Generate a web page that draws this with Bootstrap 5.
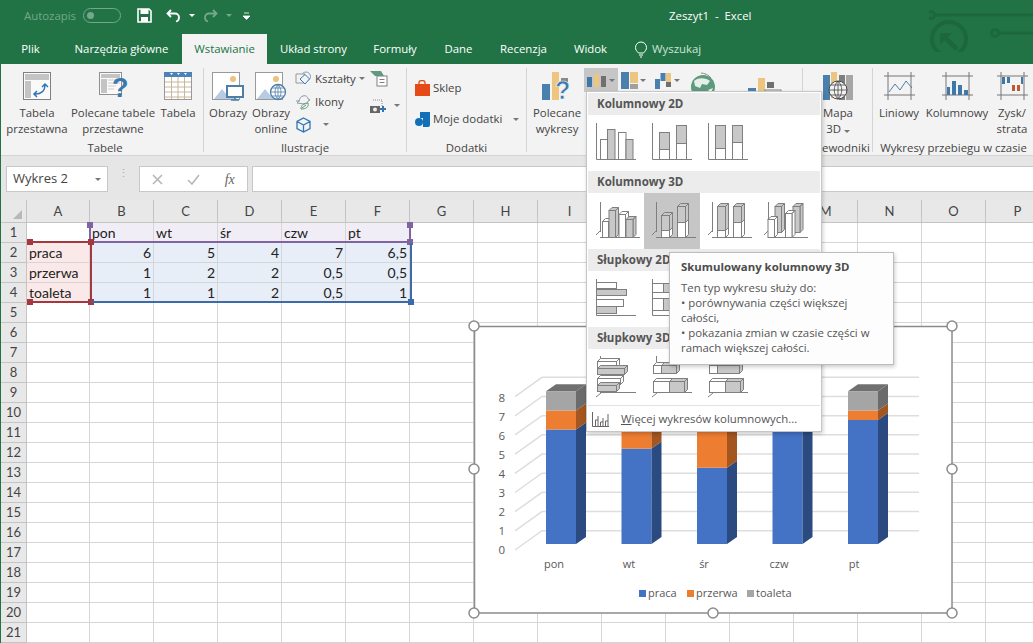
<!DOCTYPE html>
<html lang="pl">
<head>
  <meta charset="UTF-8">
  <meta name="viewport" content="width=device-width, initial-scale=1">
  <title>Zeszyt1 - Excel</title>
  <link href="https://cdn.jsdelivr.net/npm/bootstrap@5.3.2/dist/css/bootstrap.min.css" rel="stylesheet">
  <style>
    html, body { margin: 0; height: 643px; overflow: hidden; }
    body { font-family: "Open Sans", "Noto Sans", sans-serif; font-size: 11.4px; color: #444; }
    .app { width: 1033px; height: 643px; padding-left: 1px; background: #217346; position: relative; overflow: hidden; }

    /* title bar + tabs */
    .title-row { height: 32px; margin-left: -1px; color: #fff; }
    .qa { width: 669px; padding-left: 24px; }
    .auto-txt { color: #74a88b; width: 59px; }
    .toggle { width: 38px; height: 15px; border: 1px solid #74a88b; border-radius: 8px; padding: 3px; margin-right: 16px; }
    .toggle i { display: block; width: 7px; height: 7px; border-radius: 50%; background: #74a88b; }
    .save-ico { margin-right: 14px; }
    .qa-more { margin-left: 11px; }
    .circuit { position: absolute; right: 0; top: 0; }
    .tabs { height: 32px; margin-left: -1px; padding-top: 2px; color: #fff; }
    .xl-tab { line-height: 30px; text-align: center; white-space: nowrap; }
    .xl-tab.on { background: #f3f3f3; color: #217346; }
    .t1 { width: 61px; } .t2 { width: 121px; } .t3 { width: 85px; } .t4 { width: 93px; }
    .t5 { width: 70px; } .t6 { width: 57px; } .t7 { width: 73px; } .t8 { width: 61px; }
    .search { color: #cfe3d7; margin-left: 13px; gap: 4px; }

    /* ribbon */
    .ribbon { height: 92px; background: #f3f3f3; border-bottom: 1px solid #d4d4d4; overflow: hidden; }
    .rb-group { margin-top: 4px; height: 84px; border-right: 1px solid #d4d4d4; flex: none; }
    .rb-items { height: 74px; }
    .rb-label { height: 12px; line-height: 12px; text-align: center; white-space: nowrap; }
    .rb-big { padding-top: 4px; line-height: 16px; text-align: center; flex: none; white-space: nowrap; }
    .rb-big svg { margin-bottom: 5px; display: block; overflow: visible; }
    .g1 { width: 203px; padding-left: 6px; } .g2 { width: 203px; } .g3 { width: 120px; }
    .g4 { width: 276px; } .g5 { width: 70px; } .g6 { width: 161px; border: 0; }
    .w38 { width: 38px; } .w40 { width: 40px; } .w46 { width: 46px; } .w52 { width: 52px; }
    .w60 { width: 60px; } .w64 { width: 64px; } .w70 { width: 70px; } .w92 { width: 92px; }
    .pad4 { margin-left: 4px; }
    .small-col { width: 75px; margin-top: -1px; margin-left: 1px; }
    .small-row { height: 23px; gap: 3px; white-space: nowrap; }
    .small-col2 { width: 34px; margin-top: -1px; }
    .add-col { padding: 12px 0 0 8px; gap: 15px; }
    .add-row { height: 16px; gap: 3px; white-space: nowrap; }
    .caret { display: inline-block; width: 0; height: 0; border: 3px solid transparent; border-top: 3px solid #777; border-bottom: 0; }
    .caret.lt { border-top-color: #fff; }
    .caret.dim { border-top-color: #74a88b; }
    .chart-btns { margin-left: 1px; width: 106px; }
    .cbtn { height: 24px; width: 34px; flex: none; gap: 2px; padding-left: 3px; }
    .cbtn.on { background: #c6c6c6; }
    .globe-ico { margin-top: 4px; }
    .pivot-ico { margin: 8px 0 0 32px; }

    /* formula row */
    .formula-row { height: 44px; background: #e6e6e6; padding: 10px 0 0 5px; }
    .fbox { height: 26px; background: #fff; border: 1px solid #c8c8c8; }
    .name-box { width: 102px; font-size: 13px; padding: 0 6px; }
    .dots { width: 31px; color: #aaa; font-size: 11px; line-height: 5px; text-align: center; }
    .fx-box { width: 109px; color: #b5b5b5; margin-right: 4px; }
    .fx-box em { font-family: "Liberation Serif", serif; font-size: 14px; color: #666; }
    .f-input { flex: 1; border-right: 0; }

    /* sheet */
    .sheet { position: relative; height: 443px; background: #fff; display: grid;
      grid-template-columns: 26px 63px repeat(15, 64px); grid-template-rows: 23px repeat(21, 20px);
      font-family: Lato, "Open Sans", sans-serif; font-size: 14px; color: #222; overflow: hidden; }
    .xc { border-right: 1px solid #d6d6d6; border-bottom: 1px solid #d6d6d6; padding: 0 2px; line-height: 19px; white-space: nowrap; }
    .xh { background: #e8e8e8; border-right: 1px solid #c4c4c4; border-bottom: 1px solid #c4c4c4; text-align: center; color: #444;
      font-size: 13px; line-height: 22px; }
    .rh { line-height: 19px; }
    .num { text-align: right; }
    .f-a { background: #fbe9e9; } .f-h { background: #f1edf6; } .f-b { background: #e7eef8; }
    .corner { position: relative; }
    .corner i { position: absolute; right: 4px; bottom: 3px; border-left: 9px solid transparent; border-bottom: 9px solid #b8b8b8; }
    .rng { position: absolute; pointer-events: none; }
    .r-h { left: 88px; top: 22px; width: 322px; height: 21px; border-left: 2px solid #8064a2; border-right: 2px solid #8064a2; border-bottom: 2px solid #8064a2; }
    .r-a { left: 26px; top: 41px; width: 65px; height: 62px; border-top: 2px solid #a5373f; border-right: 2px solid #a5373f; border-bottom: 2px solid #a5373f; }
    .r-b { left: 90px; top: 43px; width: 321px; height: 60px; border-right: 2px solid #3d6aa8; border-bottom: 2px solid #3d6aa8; }
    .hd { position: absolute; width: 6px; height: 6px; }
    .r-h .hd { background: #8064a2; } .r-a .hd { background: #a5373f; } .r-b .hd { background: #3d6aa8; }

    /* chart + dropdown */
    .chart { position: absolute; left: 474px; top: 326px; overflow: visible; font-family: "Open Sans", sans-serif; }
    .gallery { position: absolute; left: 586px; top: 91px; width: 236px; height: 341px; background: #fff; border: 1px solid #c6c6c6;
      box-shadow: 1px 2px 4px rgba(0,0,0,.2); padding: 1px; }
    .gal-head { height: 22px; line-height: 21px; background: #ececec; font-weight: 700; color: #555; padding-left: 9px; font-size: 11.5px; }
    .gal-row { height: 56px; }
    .gal-row:first-of-type { height: 55px; }
    .gal-tile { width: 56px; height: 56px; flex: none; }
    .gal-tile.on { background: #c6c6c6; }
    .gal-more { border-top: 1px solid #e2e2e2; height: 27px; padding-left: 4px; gap: 12px; color: #555; white-space: nowrap; }
    .tip { position: absolute; left: 669px; top: 252px; width: 225px; height: 113px; background: #fdfdfd; border: 1px solid #bdbdbd;
      box-shadow: 1px 2px 4px rgba(0,0,0,.2); padding: 6px 11px; line-height: 15px; color: #555; white-space: nowrap; }
    .tip b { display: block; margin-bottom: 6px; color: #4c4c4c; }
  </style>
</head>
<body>
<div class="app">
  <div class="title-row d-flex align-items-center">
    <div class="qa d-flex align-items-center">
      <span class="auto-txt">Autozapis</span>
      <span class="toggle"><i></i></span>
      <svg width="15" height="15" viewBox="0 0 15 15" class="save-ico"><path d="M1 1h11l2 2v11H1z" fill="none" stroke="#fff" stroke-width="1.6"/><rect x="3.5" y="1" width="8" height="5" fill="#fff"/><rect x="4" y="9" width="7" height="5" fill="#fff"/></svg>
      <svg width="15" height="14" viewBox="0 0 15 14"><path d="M5 1 1.5 4.500 5 8M2 4.500h7a4 4 0 0 1 4 4c0 2-1 3.500-3 4" fill="none" stroke="#fff" stroke-width="1.800"/></svg>
      <span class="caret lt ms-2 me-1"></span>
      <svg width="15" height="14" viewBox="0 0 15 14" class="ms-1"><path d="M10 1l3.500 3.500L10 8M13 4.500H6a4 4 0 0 0-4 4c0 2 1 3.500 3 4" fill="none" stroke="#74a88b" stroke-width="1.800"/></svg>
      <span class="caret dim ms-2"></span>
      <svg width="7" height="8" viewBox="0 0 7 8" class="qa-more"><path d="M1 1h5M0 4h7l-3.500 3.500z" fill="#fff" stroke="#fff" stroke-width=".8"/></svg>
    </div>
    <span>Zeszyt1&nbsp; -&nbsp; Excel</span>
  </div>
  <svg class="circuit" width="104" height="64" viewBox="929 0 104 64" fill="none" stroke="#1c673c" stroke-width="3">
    <defs><clipPath id="cutLogo"><rect x="925" y="0" width="60" height="52"/></clipPath></defs>
    <path d="M934 15h99M999 33h34"/><circle cx="931" cy="15" r="3.500"/><circle cx="995" cy="33" r="3.500"/>
    <g clip-path="url(#cutLogo)"><circle cx="949" cy="39" r="17" stroke-width="4"/><path d="M940 33h12l-12 12z" fill="#1c673c" stroke="none"/><path d="M943 36l14 13" stroke-width="4.500"/></g>
  </svg>
  <div class="tabs d-flex">
    <div class="xl-tab t1">Plik</div>
    <div class="xl-tab t2">Narzędzia główne</div>
    <div class="xl-tab t3 on">Wstawianie</div>
    <div class="xl-tab t4">Układ strony</div>
    <div class="xl-tab t5">Formuły</div>
    <div class="xl-tab t6">Dane</div>
    <div class="xl-tab t7">Recenzja</div>
    <div class="xl-tab t8">Widok</div>
    <div class="search d-flex align-items-center">
      <svg width="14" height="17" viewBox="0 0 14 17" fill="none" stroke="#fff"><path d="M4.500 12C2.500 10 1.500 8.500 1.500 6.500a5.500 5.500 0 0 1 11 0c0 2-1 3.500-3 5.500zM5 14h4M6 16h2"/></svg>
      <span>Wyszukaj</span>
    </div>
  </div>

  <div class="ribbon d-flex">
    <div class="rb-group g1">
      <div class="rb-items d-flex">
        <div class="rb-big w60 d-flex flex-column align-items-center">
          <svg width="28" height="28" viewBox="0 0 28 28"><rect x=".5" y=".5" width="27" height="27" fill="#fafafa" stroke="#808080"/><rect x="2" y="2" width="24" height="6" fill="#c4c4c4"/><rect x="2" y="9" width="6" height="17" fill="#c4c4c4"/><path d="M12 22c6 0 10-3 10-9M19 15l3-3 3 3M14 19l-3 3 3 3" fill="none" stroke="#2f75b5" stroke-width="1.500"/></svg>
          <span>Tabela<br>przestawna</span>
        </div>
        <div class="rb-big w92 d-flex flex-column align-items-center">
          <svg width="28" height="28" viewBox="0 0 28 28"><rect x=".5" y=".5" width="22" height="22" fill="#fafafa" stroke="#909090"/><rect x="2" y="2" width="19" height="4" fill="#c4c4c4"/><rect x="2" y="7" width="6" height="14" fill="#c4c4c4"/><path d="M9 8h12M9 11h12M9 14h8M9 17h6" stroke="#ccc"/><text x="13" y="25" font-size="27" font-weight="700" fill="#3a78b0" font-family="Liberation Sans, sans-serif">?</text></svg>
          <span>Polecane tabele<br>przestawne</span>
        </div>
        <div class="rb-big w38 d-flex flex-column align-items-center">
          <svg width="28" height="28" viewBox="0 0 28 28"><rect x=".5" y=".5" width="27" height="27" fill="#fff" stroke="#999"/><rect width="28" height="5" fill="#4d82b8"/><path d="M1 10h26M1 15h26M1 20h26M1 25h26M7.500 5v22M14 5v22M20.500 5v22" stroke="#c9b59a"/><path d="M6 1h3L7.500 3zM13 1h3l-1.500 2zM20 1h3l-1.500 2z" fill="#fff"/></svg>
          <span>Tabela</span>
        </div>
      </div>
      <div class="rb-label">Tabele</div>
    </div>

    <div class="rb-group g2">
      <div class="rb-items d-flex">
        <div class="rb-big w40 pad4 d-flex flex-column align-items-center">
          <svg width="32" height="28" viewBox="0 0 32 28"><rect x=".5" y=".5" width="27" height="27" fill="#fff" stroke="#999"/><circle cx="21" cy="7" r="3" fill="#ecc27e"/><path d="M2 27l8-10 5 6 3-3 7 7z" fill="#b7cce3"/><rect x="15" y="14" width="16" height="11" fill="#fff" stroke="#4c7ea8" stroke-width="2"/><path d="M23 25v3M19 28h8" stroke="#4c7ea8" stroke-width="1.500"/></svg>
          <span>Obrazy</span>
        </div>
        <div class="rb-big w46 d-flex flex-column align-items-center">
          <svg width="32" height="28" viewBox="0 0 32 28"><rect x=".5" y=".5" width="27" height="27" fill="#fff" stroke="#999"/><circle cx="21" cy="7" r="3" fill="#ecc27e"/><path d="M2 27l8-10 5 6 3-3 7 7z" fill="#b7cce3"/><circle cx="23" cy="20" r="7.500" fill="#fff" stroke="#4c7ea8" stroke-width="1.300"/><path d="M15.500 20h15M23 12.500v15M17 16h12M17 24h12M23 12.500c-4 4-4 11 0 15M23 12.500c4 4 4 11 0 15" fill="none" stroke="#4c7ea8" stroke-width=".8"/></svg>
          <span>Obrazy<br>online</span>
        </div>
        <div class="small-col">
          <div class="small-row d-flex align-items-center">
            <svg width="17" height="16" viewBox="0 0 17 16" fill="none"><circle cx="11" cy="5.500" r="4.500" stroke="#7f9db8"/><path d="M1 3h9v9H1z" stroke="#999" fill="#f3f3f3"/><path d="M10 3.500 14.500 8 10 13 5 8z" stroke="#3b7ab0" fill="#f3f3f3"/></svg>
            <span>Kształty</span><span class="caret"></span>
          </div>
          <div class="small-row d-flex align-items-center">
            <svg width="17" height="16" viewBox="0 0 17 16" fill="none" stroke="#8a9aa8"><path d="M2 9c3-2 2-6 6-7 3-1 5 1 5 3l2 1-2 1c0 2-2 3-4 3zM1 7h4"/><path d="M6 15c0-4 3-6 7-6 1 4-2 6-7 6zM7 14l4-3" stroke="#5f9a7c"/></svg>
            <span>Ikony</span>
          </div>
          <div class="small-row d-flex align-items-center">
            <svg width="17" height="16" viewBox="0 0 17 16" fill="none" stroke="#2f75b5" stroke-width="1.300"><path d="M8.500 1 15 4.500v7L8.500 15 2 11.500v-7zM2 4.500l6.500 3.500L15 4.500M8.500 8v7"/></svg>
            <span class="caret ms-2"></span>
          </div>
        </div>
        <div class="small-col2">
          <div class="small-row d-flex align-items-center">
            <svg width="18" height="17" viewBox="0 0 18 17"><path d="M0 1h11l3 5H5z" fill="#5e9a7d"/><rect x="7" y="6" width="10" height="10" fill="#fff" stroke="#808080"/><path d="M9.500 9.500h5M9.500 12.500h5" stroke="#808080"/></svg>
          </div>
          <div class="small-row d-flex align-items-center mt-1">
            <svg width="17" height="14" viewBox="0 0 17 14"><path d="M3 1h9v6" fill="none" stroke="#888" stroke-dasharray="1 1"/><rect x="0" y="7" width="10" height="7" fill="#666"/><circle cx="5" cy="10.500" r="2" fill="#eee"/><path d="M13 7v6M10 10h6" stroke="#2f75b5" stroke-width="2"/></svg>
            <span class="caret ms-1"></span>
          </div>
        </div>
      </div>
      <div class="rb-label">Ilustracje</div>
    </div>

    <div class="rb-group g3">
      <div class="rb-items add-col d-flex flex-column">
        <div class="add-row d-flex align-items-center">
          <svg width="15" height="16" viewBox="0 0 15 16"><path d="M0 4h15v12H0z" fill="#e64a19"/><path d="M4 4V2.500a3 2 0 0 1 6 0V4" fill="none" stroke="#e64a19" stroke-width="1.300"/></svg>
          <span>Sklep</span>
        </div>
        <div class="add-row d-flex align-items-center">
          <svg width="15" height="15" viewBox="0 0 15 15"><path d="M5 0h10v13a2 2 0 0 1-2 2H8V6H5z" fill="#1170b8"/><circle cx="4" cy="10" r="4" fill="#1170b8"/></svg>
          <span>Moje dodatki</span><span class="caret ms-2"></span>
        </div>
      </div>
      <div class="rb-label">Dodatki</div>
    </div>

    <div class="rb-group g4">
      <div class="rb-items d-flex">
        <div class="rb-big w52 pad4 d-flex flex-column align-items-center">
          <svg width="30" height="28" viewBox="0 0 30 28"><rect x="0" y="12" width="8" height="16" fill="#4a80ad"/><rect x="10" y="0" width="7" height="28" fill="#eec57f"/><rect x="19" y="6" width="7" height="4" fill="#8a8a8a"/><text x="13" y="27" font-size="25" font-weight="700" fill="#3a78b0" stroke="#f3f3f3" stroke-width=".6" font-family="Liberation Sans, sans-serif">?</text></svg>
          <span>Polecane<br>wykresy</span>
        </div>
        <div class="chart-btns d-flex align-items-start">
          <div class="cbtn on d-flex align-items-center">
            <svg width="20" height="13" viewBox="0 0 20 13"><rect x="0" y="3" width="5" height="10" fill="#3d78a8"/><rect x="7" y="0" width="5" height="13" fill="#eec57f"/><rect x="14" y="2" width="5" height="11" fill="#707070"/></svg><span class="caret"></span>
          </div>
          <div class="cbtn d-flex align-items-center">
            <svg width="17" height="17" viewBox="0 0 17 17"><rect width="8" height="17" fill="#4a80ad"/><rect x="9" width="8" height="11" fill="#eec57f"/><rect x="9" y="12" width="8" height="5" fill="#a0a0a0"/></svg><span class="caret"></span>
          </div>
          <div class="cbtn d-flex align-items-center">
            <svg width="17" height="17" viewBox="0 0 17 17"><rect x="0" y="7" width="5" height="10" fill="#4a80ad"/><rect x="5.500" y="1" width="5" height="8" fill="#4a80ad"/><rect x="11" y="1" width="5" height="9" fill="#eec57f"/><rect x="11" y="10" width="5" height="5" fill="#707070"/></svg><span class="caret"></span>
          </div>
        </div>
        <svg width="26" height="28" viewBox="0 0 26 28" class="globe-ico"><circle cx="13" cy="15" r="12" fill="#5d9a7e"/><path d="M4 9c5-4 12-3 16 0l-3 4-5-1-2 4-5-2zM18 18l5-2-2 5z" fill="#e6efe9"/><path d="M11 1c3 0 8 2 10 5" fill="none" stroke="#888"/></svg>
        <svg width="34" height="28" viewBox="0 0 34 28" class="pivot-ico"><rect x="0" y="12" width="8" height="16" fill="#4a80ad"/><rect x="10" y="2" width="7" height="26" fill="#eec57f"/><rect x="19" y="6" width="7" height="6" fill="#707070"/><rect x="17" y="14" width="16" height="12" fill="#f3f3f3" stroke="#808080"/></svg>
      </div>
      <div class="rb-label">&nbsp;</div>
    </div>

    <div class="rb-group g5">
      <div class="rb-items d-flex">
        <div class="rb-big w70 d-flex flex-column align-items-center">
          <svg width="30" height="28" viewBox="0 0 30 28"><rect x="0" y="3" width="7" height="25" fill="#4a80ad"/><rect x="8" y="0" width="6" height="26" fill="#eec57f"/><rect x="16" y="3" width="6" height="25" fill="#7f7f7f"/><rect x="23" y="3" width="7" height="25" fill="#a6a6a6"/><circle cx="15" cy="18" r="9" fill="#f3f3f3" stroke="#444"/><path d="M6 18h18M15 9v18M8 13h14M8 23h14M15 9c-5 5-5 13 0 18M15 9c5 5 5 13 0 18" fill="none" stroke="#444" stroke-width=".8"/></svg>
          <span>Mapa<br>3D <span class="caret"></span></span>
        </div>
      </div>
      <div class="rb-label">Przewodniki</div>
    </div>

    <div class="rb-group g6">
      <div class="rb-items d-flex">
        <div class="rb-big w52 d-flex flex-column align-items-center">
          <svg width="31" height="28" viewBox="0 0 31 28" fill="none"><path d="M0 4h31M0 23h31M4 0v28M27 0v28" stroke="#777"/><path d="M5 20l6-8 5 6 6-9 6 7" stroke="#4a80ad"/></svg>
          <span>Liniowy</span>
        </div>
        <div class="rb-big w64 d-flex flex-column align-items-center">
          <svg width="31" height="28" viewBox="0 0 31 28" fill="none"><path d="M0 4h31M0 23h31M4 0v28M27 0v28" stroke="#777"/><path d="M5 15h3v8H5zM10 9h4v14h-4zM16 13h4v10h-4zM22 18h4v5h-4z" fill="#3d78a8"/></svg>
          <span>Kolumnowy</span>
        </div>
        <div class="rb-big w46 d-flex flex-column align-items-center">
          <svg width="31" height="28" viewBox="0 0 31 28" fill="none"><path d="M0 4h31M0 23h31M4 0v28M27 0v28" stroke="#777"/><path d="M5 5h3v7H5zM10 5h3v6h-3zM24 5h2v7h-2z" fill="#3d78a8"/><path d="M15 13h3v6h-3zM20 13h3v6h-3z" fill="#c0553a"/></svg>
          <span>Zysk/<br>strata</span>
        </div>
      </div>
      <div class="rb-label">Wykresy przebiegu w czasie</div>
    </div>
  </div>

  <div class="formula-row d-flex align-items-start">
    <div class="fbox name-box d-flex align-items-center justify-content-between"><span>Wykres 2</span><span class="caret"></span></div>
    <div class="dots d-flex flex-column justify-content-center align-items-center pt-1"><span>⋮</span></div>
    <div class="fbox fx-box d-flex align-items-center justify-content-around">
      <svg width="11" height="11" viewBox="0 0 11 11"><path d="M1 1l9 9M10 1l-9 9" stroke="#b5b5b5" stroke-width="1.500"/></svg>
      <svg width="13" height="11" viewBox="0 0 13 11"><path d="M1 6l4 4 7-9" fill="none" stroke="#b5b5b5" stroke-width="1.500"/></svg>
      <em>fx</em>
    </div>
    <div class="fbox f-input"></div>
  </div>

  <div class="sheet" id="sheet"></div>

  <svg class="chart" id="chart" width="478" height="287" viewBox="474 326 478 287"></svg>

  <div class="gallery" id="gallery"></div>

  <div class="tip">
    <b>Skumulowany kolumnowy 3D</b>
    Ten typ wykresu służy do:<br>
    • porównywania części większej<br>
    całości,<br>
    • pokazania zmian w czasie części w<br>
    ramach większej całości.
  </div>
</div>

<script src="https://cdn.jsdelivr.net/npm/bootstrap@5.3.2/dist/js/bootstrap.bundle.min.js"></script>
<script>
  // arkusz
  const cols = 'ABCDEFGHIJKLMNOP'.split('');
  const cells = {
    1: ['', 'pon', 'wt', 'śr', 'czw', 'pt'],
    2: ['praca', 6, 5, 4, 7, '6,5'],
    3: ['przerwa', 1, 2, 2, '0,5', '0,5'],
    4: ['toaleta', 1, 1, 2, '0,5', 1]
  };
  let html = '<div class="xh corner"><i></i></div>';
  cols.forEach(c => { html += `<div class="xh">${c}</div>`; });
  for (let r = 1; r <= 21; r++) {
    html += `<div class="xh rh">${r}</div>`;
    for (let c = 0; c < 16; c++) {
      const v = cells[r] && cells[r][c] !== undefined ? cells[r][c] : '';
      let cls = 'xc';
      if (r === 1 && c > 0 && c < 6) cls += ' f-h';
      if (r > 1 && r < 5 && c === 0) cls += ' f-a';
      if (r > 1 && r < 5 && c > 0 && c < 6) cls += ' f-b';
      if (r > 1 && c > 0 && v !== '') cls += ' num';
      html += `<div class="${cls}">${v}</div>`;
    }
  }
  html += `<div class="rng r-h"><span class="hd" style="left:-4px;top:0"></span><span class="hd" style="right:-4px;top:0"></span><span class="hd" style="right:-4px;bottom:-4px"></span></div>
    <div class="rng r-a"><span class="hd" style="left:0;top:-4px"></span><span class="hd" style="right:-4px;top:-4px"></span><span class="hd" style="left:0;bottom:-4px"></span><span class="hd" style="right:-4px;bottom:-4px"></span></div>
    <div class="rng r-b"><span class="hd" style="right:-4px;bottom:-4px"></span></div>`;
  document.getElementById('sheet').innerHTML = html;

  // wykres
  const series = [
    { name: 'pon', v: [6, 1, 1] }, { name: 'wt', v: [5, 2, 1] }, { name: 'śr', v: [4, 2, 2] },
    { name: 'czw', v: [7, .5, .5] }, { name: 'pt', v: [6.5, .5, 1] }
  ];
  const front = ['#4472c4', '#ed7d31', '#a5a5a5'], side = ['#2a4a80', '#a3561f', '#6b6b6b'];
  let svg = '<rect x="474.500" y="326.500" width="477.500" height="286.500" fill="#fff" stroke="#8c8c8c" stroke-width="1.500"/>';
  for (let i = 0; i <= 8; i++) {
    const y = 530.7 - 19.17 * i;
    svg += `<path d="M515 ${y + 19.3}L542 ${y}H919" fill="none" stroke="#dedede" stroke-width="1.500"/>`;
    svg += `<text x="505" y="${553.500 - 18.9 * i}" text-anchor="end" font-size="11.500" fill="#595959">${i}</text>`;
  }
  series.forEach((s, i) => {
    const x = 546 + i * 75.500;
    let base = 544;
    s.v.forEach((val, k) => {
      const h = val * 19.08, top = base - h;
      svg += `<rect x="${x}" y="${top}" width="30" height="${h}" fill="${front[k]}"/>`;
      svg += `<path d="M${x + 30} ${base}l10 -7V${top - 7}l-10 7z" fill="${side[k]}"/>`;
      base = top;
    });
    svg += `<path d="M${x} ${base}l10 -7h30l-10 7z" fill="#707070"/>`;
    svg += `<text x="${554 + i * 75}" y="568" text-anchor="middle" font-size="11" fill="#595959">${s.name}</text>`;
  });
  [['praca', 639], ['przerwa', 687], ['toaleta', 747]].forEach((l, k) => {
    svg += `<rect x="${l[1]}" y="590" width="7" height="7" fill="${front[k]}"/>`;
    svg += `<text x="${l[1] + 9}" y="597" font-size="11" fill="#595959">${l[0]}</text>`;
  });
  [[474, 326], [952, 326], [474, 469], [952, 469], [474, 613], [713, 613], [952, 613]].forEach(p => {
    svg += `<circle cx="${p[0]}" cy="${p[1]}" r="5" fill="#fff" stroke="#8c8c8c" stroke-width="1.500"/>`;
  });
  document.getElementById('chart').innerHTML = svg;

  // galeria wykresów kolumnowych
  const line = '#7f7f7f', gray = '#c8c8c8';
  const flat = (x, y, w, h, f) => `<rect x="${x}" y="${y}" width="${w}" height="${h}" fill="${f}" stroke="${line}"/>`;
  const box3 = (x, y, w, h, f) => `<path d="M${x} ${y}l3 -3h${w}l-3 3zM${x + w} ${y}l3 -3v${h}l-3 3z" fill="${f === '#fff' ? '#fff' : gray}" stroke="${line}"/>` + flat(x, y, w, h, f);
  const axes2 = '<path d="M8.500 8v36.500H48" fill="none" stroke="#7f7f7f"/>';
  const axes3 = '<path d="M12.500 9v30M8 42l5 -5M12 44.500H52" fill="none" stroke="#7f7f7f"/>';
  const axesH3 = '<path d="M12.500 7v6M8 48l5 -4M12 43.500H48" fill="none" stroke="#7f7f7f"/>';
  const tile = (body, on) => `<div class="gal-tile${on ? ' on' : ''}"><svg width="56" height="56" viewBox="0 0 56 56">${body}</svg></div>`;
  const w = '#fff';
  const rows = [
    ['Kolumnowy 2D', [
      axes2 + flat(12.5, 24.5, 7, 20, w) + flat(19.5, 14.5, 7.5, 30, gray) + flat(30.5, 17.5, 7.5, 27, w) + flat(38, 24.5, 7, 20, gray),
      axes2 + flat(15.5, 34.5, 10, 10, w) + flat(15.5, 17.5, 10, 17, gray) + flat(32.5, 28.5, 10, 16, w) + flat(32.5, 10.5, 10, 18, gray),
      axes2 + flat(15.5, 33.5, 10, 11, w) + flat(15.5, 10.5, 10, 23, gray) + flat(32.5, 27.5, 10, 17, w) + flat(32.5, 10.5, 10, 17, gray)
    ]],
    ['Kolumnowy 3D', [
      axes3 + box3(14.5, 28.5, 6, 16, w) + box3(21, 17.5, 6.5, 27, gray) + box3(31, 21.5, 6.5, 23, w) + box3(38, 26.5, 7, 18, gray),
      axes3 + box3(17.5, 37.5, 8, 7, w) + box3(17.5, 22.5, 8, 15, gray) + box3(33.5, 29.5, 8, 15, w) + box3(33.5, 13.5, 8, 16, gray),
      axes3 + box3(17.5, 37.5, 8, 7, w) + box3(17.5, 13.5, 8, 24, gray) + box3(33.5, 29.5, 8, 15, w) + box3(33.5, 13.5, 8, 16, gray),
      axes3 + box3(19, 13.5, 6.5, 26, gray) + box3(12, 26.5, 6.5, 18, w) + box3(37, 13.5, 7, 26, gray) + box3(29.5, 20.5, 6.5, 24, w)
    ]],
    ['Słupkowy 2D', [
      axes2 + flat(8.5, 11.5, 20, 6, w) + flat(8.5, 18.5, 30, 6, gray) + flat(8.5, 28.5, 27, 7, w) + flat(8.5, 35.5, 20, 7, gray),
      axes2 + flat(8.5, 12.5, 11, 9, w) + flat(19.5, 12.5, 11, 9, gray) + flat(8.5, 27.5, 11, 12, w) + flat(19.5, 27.5, 15, 12, gray),
      axes2 + flat(8.5, 12.5, 25, 9, gray)
    ]],
    ['Słupkowy 3D', [
      axesH3 + box3(9.5, 12.5, 19, 6, w) + box3(9.5, 19.5, 27, 6, gray) + box3(9.5, 29.5, 23, 6, w) + box3(9.5, 36.5, 19, 6, gray),
      axesH3 + box3(9.5, 16.5, 8, 8, w) + box3(17.5, 16.5, 15, 8, gray) + box3(9.5, 32.5, 16, 11, w) + box3(25.5, 32.5, 15, 11, gray),
      axesH3 + box3(9.5, 16.5, 8, 8, w) + box3(17.5, 16.5, 22, 8, gray) + box3(9.5, 32.5, 16, 11, w) + box3(25.5, 32.5, 15, 11, gray)
    ]]
  ];
  let gal = '';
  rows.forEach((r, i) => {
    gal += `<div class="gal-head">${r[0]}</div><div class="gal-row d-flex">${r[1].map((b, k) => tile(b, i === 1 && k === 1)).join('')}</div>`;
  });
  gal += `<div class="gal-more d-flex align-items-center">
    <svg width="17" height="15" viewBox="0 0 17 15" fill="none" stroke="#666"><path d="M.5 0v14.500H17M3.500 8v6M6 4v10M3.500 8H6M8.500 10v4M11 6v8M8.500 10H11M13.500 9v5M16 2v12M13.500 9H16"/></svg>
    <span><u>W</u>ięcej wykresów kolumnowych...</span></div>`;
  document.getElementById('gallery').innerHTML = gal;
</script>
</body>
</html>
